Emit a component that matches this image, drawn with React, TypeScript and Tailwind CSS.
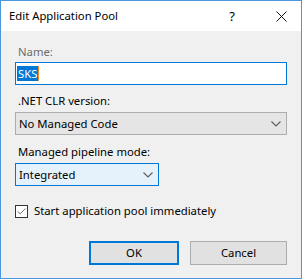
import { Check } from 'lucide-react';

const Chevron = () => (
  <svg width="10" height="6" viewBox="0 0 10 6" className="shrink-0">
    <path d="M0.5 0.5 L5 5 L9.5 0.5" fill="none" stroke="#606060" strokeWidth="1.2" />
  </svg>
);

const App = () => {
  return (
    <div className="w-[302px] h-[279px] flex flex-col border border-[#4a97e0] bg-[#f0f0f0] font-['Noto_Sans',sans-serif] text-[11.3px] leading-[16px] text-black">
      <div className="h-[30px] shrink-0 bg-white flex items-center pl-[8px]">
        <span className="flex-1 text-[11.3px]">Edit Application Pool</span>
        <span className="w-[12px] text-center text-[13px] mr-[38px]">?</span>
        <svg width="11" height="11" viewBox="0 0 11 11" className="mr-[14px]">
          <path d="M0.5 0.5 L10.5 10.5 M10.5 0.5 L0.5 10.5" stroke="#111" strokeWidth="1" />
        </svg>
      </div>

      <div className="flex-1 flex flex-col px-[14px] pt-[13px]">
        <div className="pl-[3px] text-[#6d6d6d]">Name:</div>
        <div className="mt-[2px] h-[23px] border border-[#0078d7] bg-white flex items-center pl-[1px]">
          <span className="bg-[#0078d7] text-white px-[1px] leading-[15px]">SKS</span>
          <span className="w-[1px] h-[15px] bg-[#f08a24]"></span>
        </div>

        <div className="pl-[3px] mt-[8px]">.NET CLR version:</div>
        <div className="mt-[3px] h-[23px] border border-[#adadad] bg-[#e5e5e5] flex items-center pl-[3px] pr-[5px]">
          <span className="flex-1">No Managed Code</span>
          <Chevron />
        </div>

        <div className="pl-[3px] mt-[9px]">Managed pipeline mode:</div>
        <div className="mt-[3px] w-[144px] h-[23px] border border-[#0078d7] bg-[#e5f1fb] flex items-center pl-[3px] pr-[5px]">
          <span className="flex-1">Integrated</span>
          <Chevron />
        </div>

        <label className="mt-[17px] flex items-center gap-[6px]">
          <span className="w-[13px] h-[13px] border border-[#333] bg-white flex items-center justify-center">
            <Check size={11} strokeWidth={1.6} color="#333" />
          </span>
          <span>Start application pool immediately</span>
        </label>

        <div className="mt-[22px] flex justify-end gap-[11px]">
          <button className="w-[90px] h-[24px] border-2 border-[#0078d7] bg-[#e1e1e1] text-[11.3px]">OK</button>
          <button className="w-[97px] h-[24px] border border-[#adadad] bg-[#e1e1e1] text-[11.3px]">Cancel</button>
        </div>
      </div>
    </div>
  );
};

export default App;
